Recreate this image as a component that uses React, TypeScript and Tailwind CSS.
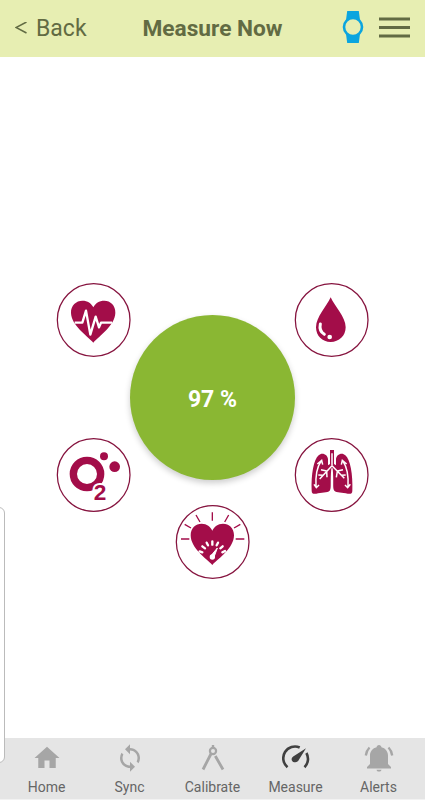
import React from 'react'
import { MdHome, MdSync } from 'react-icons/md'

const Ring = ({
  children,
  viewBox,
  cx,
  cy
}: {
  children: React.ReactNode
  viewBox: string
  cx: number
  cy: number
}) => (
  <button className="block size-[74px] shrink-0 rounded-full text-[#a30d49]">
    <svg viewBox={viewBox} className="block size-full overflow-visible">
      <circle
        cx={cx}
        cy={cy}
        r="109"
        fill="none"
        stroke="#86143f"
        strokeWidth="3.8"
      />
      {children}
    </svg>
  </button>
)

const HeartRate = () => (
  <Ring viewBox="21 15 222 222" cx={131} cy={126}>
    <path
      d="M130 194C112 174 64 142 63 105C62 82 79 68 97 68C113 68 124 76 130 88C136 76 147 68 163 68C181 68 197 82 196 105C195 142 148 174 130 194Z"
      fill="currentColor"
    />
    <path
      d="M74 134H97L108 98L121 170L137 116L147 148L153 134H186"
      fill="none"
      stroke="white"
      strokeWidth="7"
      strokeLinejoin="round"
    />
  </Ring>
)

const Blood = () => (
  <Ring viewBox="21 15 222 222" cx={131} cy={126}>
    <path
      d="M128 58C140 85 173 117 173 148C173 174 153 192 128 192C103 192 84 174 84 148C84 117 116 85 128 58Z"
      fill="currentColor"
    />
    <path
      d="M97 138C94 152 99 163 109 169"
      fill="none"
      stroke="white"
      strokeWidth="9"
      strokeLinecap="round"
    />
    <circle cx="125" cy="177" r="7" fill="white" />
  </Ring>
)

const Oxygen = () => (
  <Ring viewBox="21 12 222 222" cx={131} cy={123}>
    <circle
      cx="111"
      cy="120"
      r="41"
      fill="none"
      stroke="currentColor"
      strokeWidth="22"
    />
    <circle cx="162" cy="67" r="12" fill="currentColor" />
    <circle cx="194" cy="98" r="16" fill="currentColor" />
    <text
      x="150"
      y="197"
      textAnchor="middle"
      fontFamily="Liberation Sans"
      fontWeight="bold"
      fontSize="68"
      fill="currentColor"
      stroke="white"
      strokeWidth="12"
      paintOrder="stroke"
    >
      2
    </text>
  </Ring>
)

const Lungs = () => (
  <Ring viewBox="21 12 222 222" cx={131} cy={123}>
    <path
      d="M126 48H138V90L144 94V76C144 62 162 53 172 64C187 77 195 122 193 170C193 178 188 181 179 179C164 175 145 176 139 170C133 164 138 143 134 103H130C126 143 131 164 125 170C119 176 99 175 85 179C76 181 71 178 71 170C69 122 77 77 92 64C102 53 120 62 120 76V94L126 90Z"
      fill="currentColor"
    />
    <path
      d="M132 58V94M132 95L95 135M132 95L169 133M116 111L99 107M148 111L165 107M116 112L117 130M148 112L145 130M105 124L91 123M159 124L173 123"
      fill="none"
      stroke="white"
      strokeWidth="4.5"
    />
    <path
      d="M99 82Q81 107 84 160M165 82Q183 107 180 160M88 90L101 79L104 92M78 151L85 161L93 153M160 92L163 79L176 90M171 153L179 161L187 151"
      fill="none"
      stroke="white"
      strokeWidth="4.5"
    />
  </Ring>
)

const BloodPressure = () => (
  <Ring viewBox="24 15 222 222" cx={134} cy={126}>
    <path
      d="M133 195C114 175 68 144 68 106C68 84 83 71 101 71C117 71 127 80 133 92C139 80 149 71 165 71C183 71 198 84 198 106C198 144 152 175 133 195Z"
      fill="currentColor"
    />
    <path
      d="M39 117H64M203 117H229M50 73L69 84M217 73L198 84M84 45L96 66M182 45L170 66M133 37V62"
      stroke="currentColor"
      strokeWidth="4"
    />
    <path
      d="M95 154L103 157M103 139L111 145M116 128L120 136M133 124V134M150 128L146 136M164 139L157 145M171 153L163 157"
      stroke="white"
      strokeWidth="7"
      strokeLinecap="round"
    />
    <path d="M148 144L129 167L137 174Z" fill="white" stroke="white" strokeWidth="3" />
    <circle cx="133" cy="171" r="8" fill="white" />
  </Ring>
)

const CalibrateIcon = () => (
  <svg viewBox="0 0 26 28" className="h-7 w-[26px]" fill="none" stroke="currentColor">
    <circle cx="13" cy="7" r="3.1" strokeWidth="2.2" />
    <path d="M13 1V4" strokeWidth="2.4" />
    <path d="M11.2 9.5L3 25.5M15.3 12L23 25.5" strokeWidth="2.8" />
  </svg>
)

const GaugeIcon = () => (
  <svg viewBox="0 0 28 28" className="size-7" fill="none" stroke="currentColor">
    <path
      d="M17.7 3.5A11.7 11.7 0 0 0 5.5 23.2M24.4 9A11.7 11.7 0 0 1 22.5 23.2"
      strokeWidth="2.6"
    />
    <path
      d="M24 4.3L11.2 12.4C8.8 14 9.2 17.4 12.2 18.2C14.3 18.8 16.2 17.6 16.9 15.8Z"
      fill="currentColor"
      stroke="none"
    />
  </svg>
)

const BellIcon = () => (
  <svg viewBox="0 0 30 28" className="h-7 w-[30px]" fill="currentColor">
    <path d="M15 1C16.5 1 17.2 2 17.4 3.2C21.4 4.1 24 7.5 24 11.5V20L27 23V24.5H3V23L6 20V11.5C6 7.5 8.6 4.1 12.6 3.2C12.8 2 13.5 1 15 1ZM12.5 25.7H17.5C17.2 28.2 12.8 28.2 12.5 25.7Z" />
    <path
      d="M5.5 3.5Q2.5 6.5 1.8 11.5M24.5 3.5Q27.5 6.5 28.2 11.5"
      fill="none"
      stroke="currentColor"
      strokeWidth="2.3"
    />
  </svg>
)

const tabs = [
  { label: 'Home', icon: <MdHome className="size-[30px]" /> },
  { label: 'Sync', icon: <MdSync className="size-[30px]" /> },
  { label: 'Calibrate', icon: <CalibrateIcon /> },
  { label: 'Measure', icon: <GaugeIcon />, current: true },
  { label: 'Alerts', icon: <BellIcon /> }
]

export default function App() {
  const progress = 97

  return (
    <div className="relative flex h-[800px] w-[425px] flex-col overflow-hidden bg-white font-[Roboto,sans-serif]">
      <header className="grid h-[57px] shrink-0 grid-cols-[115px_1fr_115px] items-center bg-[#e7eeb2] text-[#626b43]">
        <button className="flex items-center gap-[9px] pl-[15px] text-[23px]">
          <svg
            viewBox="0 0 12 14"
            className="h-3.5 w-3"
            fill="none"
            stroke="currentColor"
            strokeWidth="1.5"
          >
            <path d="M11.5 0L1 5.5L11.5 11" />
          </svg>
          <span className="pt-0.5">Back</span>
        </button>
        <h1 className="pt-0.5 text-center text-[22.7px] font-bold">
          Measure Now
        </h1>
        <div className="flex items-center justify-end gap-[15px] pr-[15px] pb-[3px]">
          <svg viewBox="0 0 22 32" className="h-8 w-[22px] text-[#0ba5df]">
            <path d="M5.2 0H16.8L18 9H4ZM4 23H18L16.8 32H5.2Z" fill="currentColor" />
            <circle
              cx="11"
              cy="16"
              r="9"
              fill="#e7eeb2"
              stroke="currentColor"
              strokeWidth="2.6"
            />
          </svg>
          <svg viewBox="0 0 31 21" className="h-[21px] w-[31px]">
            <path
              d="M0 1.9H31M0 10.5H31M0 19.1H31"
              stroke="currentColor"
              strokeWidth="3"
            />
          </svg>
        </div>
      </header>

      <main className="flex grow flex-col items-center pt-[226px]">
        <div className="flex h-[229px] w-[312px] justify-between">
          <div className="flex flex-col justify-between">
            <HeartRate />
            <Oxygen />
          </div>
          <div className="-mx-1 mt-8 flex size-[165px] items-center justify-center rounded-full bg-[#8ab733] pt-[5px] text-[23px] font-bold text-white shadow-[0_3px_6px_rgba(0,0,0,0.2)]">
            {progress} %
          </div>
          <div className="flex flex-col justify-between">
            <Blood />
            <Lungs />
          </div>
        </div>
        <div className="-mt-[7px]">
          <BloodPressure />
        </div>
      </main>

      <nav className="flex h-[62px] shrink-0 justify-center border-b border-[#f2f2f2] bg-[#e5e5e5] px-[5px]">
        {tabs.map((tab) => (
          <button
            key={tab.label}
            data-current={tab.current ? '' : undefined}
            className="flex w-[83px] flex-col items-center pt-1 text-[#a6a6a6] data-[current]:text-[#404040]"
          >
            <span className="flex h-[31px] items-center">{tab.icon}</span>
            <span className="pt-1 text-sm leading-5 text-[#666]">
              {tab.label}
            </span>
          </button>
        ))}
      </nav>

      {/* edge panel handle, floats over the page and the tab bar */}
      <div className="absolute top-[507px] -left-4 h-[256px] w-[21px] rounded-md border border-[#bbb] bg-white" />
    </div>
  )
}
